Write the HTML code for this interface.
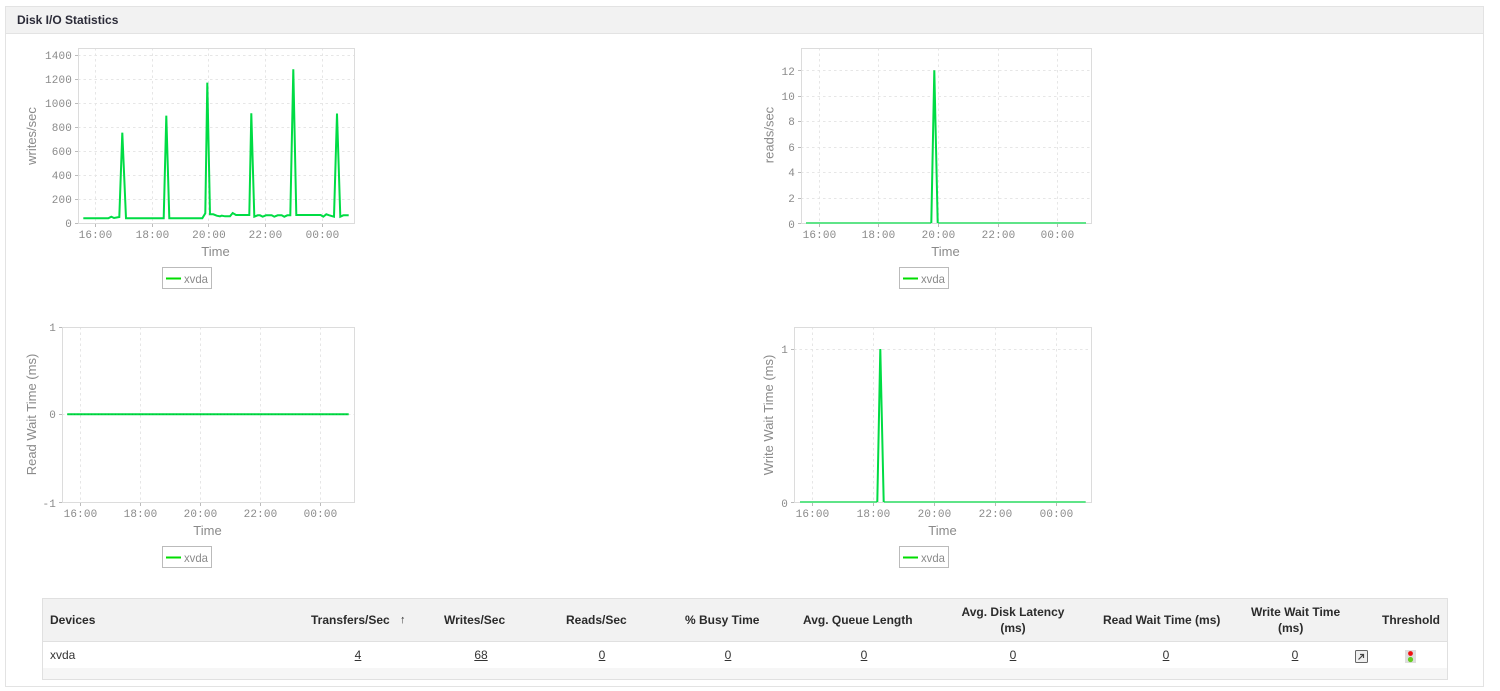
<!DOCTYPE html>
<html><head><meta charset="utf-8"><title>Disk I/O Statistics</title>
<style>
html,body{margin:0;padding:0;background:#fff;width:1500px;height:691px;overflow:hidden;font-family:"Liberation Sans",sans-serif;color:#333}
.panel{position:absolute;left:5px;top:6px;width:1477px;height:679px;border:1px solid #e3e3e3}
.phead{position:absolute;left:0;top:0;width:1477px;height:26px;background:#f2f2f2;border-bottom:1px solid #e3e3e3;font-weight:bold;font-size:12px;line-height:26px;color:#2b2b38;text-indent:11px}
svg{position:absolute;left:0;top:0}
svg.ch{filter:blur(.3px)}
svg text{font-family:"Liberation Sans",sans-serif;fill:#8a8a8a;font-size:13px}
svg .t{font-family:"Liberation Mono",monospace;font-size:11px;fill:#8a8a8a;letter-spacing:.15px}
svg .x{font-size:12px}
.grid{stroke:#e6e6e6;stroke-width:1;stroke-dasharray:2.5 3;fill:none}
.box{fill:none;stroke:#dcdcdc;stroke-width:1}
.lg{fill:#fff;stroke:#bbb;stroke-width:1}
.tk{stroke:#bbb;stroke-width:1}
.ln{fill:none;stroke:#00dc44;stroke-width:2;stroke-linejoin:miter}
.fl{fill:none;stroke:#5fe488;stroke-width:2}
.dots{fill:none;stroke:#00c038;stroke-width:1.4;stroke-dasharray:1 2.4}
.lgl{stroke:#00dd00;stroke-width:2}
.tbl{position:absolute;left:42px;top:598px;width:1404px;height:80px;border:1px solid #e0e0e0;background:#f6f6f6}
.thd{position:absolute;left:0;top:0;width:1404px;height:42px;background:#f2f2f2;border-bottom:1px solid #e0e0e0}
.row{position:absolute;left:0;top:43px;width:1404px;height:26px;background:#fff}
.c{position:absolute;text-align:center;font-size:12px;line-height:16px;white-space:nowrap}
.h{font-weight:bold;color:#2b2b2b}
.d{top:647px;color:#333}
.d u{color:#333}
</style></head><body>
<div class="panel"><div class="phead">Disk I/O Statistics</div></div>

<svg class="ch" width="1500" height="691" viewBox="0 0 1500 691">
<!-- chart 1 -->
<g class="grid"><path d="M78 55.5H354M78 79.5H354M78 103.5H354M78 127.5H354M78 151.5H354M78 175.5H354M78 199.5H354M95.5 48V223M152.5 48V223M208.5 48V223M265.5 48V223M322.5 48V223"/></g>
<rect class="box" x="78.5" y="48.5" width="276" height="175"/>
<path class="tk" d="M75 55.5h3M75 79.5h3M75 103.5h3M75 127.5h3M75 151.5h3M75 175.5h3M75 199.5h3M75 223.5h3M95.5 224v3M152.5 224v3M208.5 224v3M265.5 224v3M322.5 224v3"/>
<polyline class="ln" points="83.3,218.3 108.3,218.3 111.3,216.7 114,218 119.3,217 122.3,132.7 126,218.3 163.7,218.3 166.3,115.7 169.3,218.3 202.3,218.3 205.3,213.3 207.3,82.7 210,214.3 213.3,214.3 216.7,215.7 220,216.3 221.7,215.7 225,216.3 230,216.3 232.7,213 236,215 249.3,215 251.3,113.3 254.3,216.7 257.7,215.3 260,215.3 262.7,216.7 266,215.3 271.7,215.3 274.3,216.7 277.7,215.3 281.7,215.3 284.3,216.7 287.3,215.3 290.3,215.3 293.3,69.3 296.3,215 320.7,215 323.3,216.7 326.3,214.3 329.3,215.3 334,216.7 337,113.5 340.3,216.7 343.3,215.3 348.7,215.3"/>
<g text-anchor="end"><text class="t" x="72" y="59">1400</text><text class="t" x="72" y="83">1200</text><text class="t" x="72" y="107">1000</text><text class="t" x="72" y="131">800</text><text class="t" x="72" y="155">600</text><text class="t" x="72" y="179">400</text><text class="t" x="72" y="203">200</text><text class="t" x="72" y="227">0</text></g>
<g text-anchor="middle"><text class="t" x="95.5" y="238">16:00</text><text class="t" x="152.5" y="238">18:00</text><text class="t" x="209" y="238">20:00</text><text class="t" x="265.5" y="238">22:00</text><text class="t" x="322.5" y="238">00:00</text>
<text x="215.5" y="256">Time</text><text transform="translate(36 136) rotate(-90)">writes/sec</text></g>
<rect class="lg" x="162.5" y="267.5" width="49" height="21"/><path class="lgl" d="M166 278.5h15"/><text class="x" x="184" y="283" textLength="24" lengthAdjust="spacingAndGlyphs">xvda</text>

<!-- chart 2 -->
<g class="grid"><path d="M801 70.5H1091M801 96.5H1091M801 121.5H1091M801 147.5H1091M801 172.5H1091M801 198.5H1091M819.5 48V223M878.5 48V223M938.5 48V223M998.5 48V223M1057.5 48V223"/></g>
<rect class="box" x="801.5" y="48.5" width="290" height="175"/>
<path class="tk" d="M798 70.5h3M798 96.5h3M798 121.5h3M798 147.5h3M798 172.5h3M798 198.5h3M798 223.5h3M819.5 224v3M878.5 224v3M938.5 224v3M998.5 224v3M1057.5 224v3"/>
<path class="fl" d="M806 223H931M938 223H1086"/>
<polyline class="ln" points="931.3,223 934.3,70.3 937.7,223"/>
<g text-anchor="end"><text class="t" x="795" y="75">12</text><text class="t" x="795" y="100">10</text><text class="t" x="795" y="125">8</text><text class="t" x="795" y="151">6</text><text class="t" x="795" y="176">4</text><text class="t" x="795" y="202">2</text><text class="t" x="795" y="228">0</text></g>
<g text-anchor="middle"><text class="t" x="819.5" y="238">16:00</text><text class="t" x="878.5" y="238">18:00</text><text class="t" x="938.5" y="238">20:00</text><text class="t" x="998.5" y="238">22:00</text><text class="t" x="1057.5" y="238">00:00</text>
<text x="945.5" y="256">Time</text><text transform="translate(773.500 135) rotate(-90)">reads/sec</text></g>
<rect class="lg" x="899.5" y="267.5" width="49" height="21"/><path class="lgl" d="M903 278.5h15"/><text class="x" x="921" y="283" textLength="24" lengthAdjust="spacingAndGlyphs">xvda</text>

<!-- chart 3 -->
<g class="grid"><path d="M62 414.5H354M80.5 327V502M140.5 327V502M200.5 327V502M260.5 327V502M320.5 327V502"/></g>
<rect class="box" x="62.5" y="327.5" width="292" height="175"/>
<path class="tk" d="M59 327.5h3M59 414.5h3M59 502.5h3M80.5 503v3M140.5 503v3M200.5 503v3M260.5 503v3M320.5 503v3"/>
<polyline class="ln" points="67.3,414.3 348.7,414.3"/>
<path class="dots" d="M67.3 414.3H348.7"/>
<g text-anchor="end"><text class="t" x="56" y="331">1</text><text class="t" x="56" y="418">0</text><text class="t" x="56" y="507">-1</text></g>
<g text-anchor="middle"><text class="t" x="80.5" y="517">16:00</text><text class="t" x="140.5" y="517">18:00</text><text class="t" x="200.5" y="517">20:00</text><text class="t" x="260.5" y="517">22:00</text><text class="t" x="320.5" y="517">00:00</text>
<text x="207.5" y="535">Time</text><text transform="translate(36 414.500) rotate(-90)">Read Wait Time (ms)</text></g>
<rect class="lg" x="162.5" y="546.5" width="49" height="21"/><path class="lgl" d="M166 557.5h15"/><text class="x" x="184" y="562" textLength="24" lengthAdjust="spacingAndGlyphs">xvda</text>

<!-- chart 4 -->
<g class="grid"><path d="M794 349.5H1091M812.5 327V502M873.5 327V502M934.5 327V502M995.5 327V502M1056.5 327V502"/></g>
<rect class="box" x="794.5" y="327.5" width="297" height="175"/>
<path class="tk" d="M791 349.5h3M791 502.5h3M812.5 503v3M873.5 503v3M934.5 503v3M995.5 503v3M1056.5 503v3"/>
<path class="fl" d="M800 502H877M884 502H1085.700"/>
<polyline class="ln" points="877.3,502 880.3,349 883.7,502"/>
<g text-anchor="end"><text class="t" x="788" y="353">1</text><text class="t" x="788" y="507">0</text></g>
<g text-anchor="middle"><text class="t" x="812.5" y="517">16:00</text><text class="t" x="873.5" y="517">18:00</text><text class="t" x="934.5" y="517">20:00</text><text class="t" x="995.5" y="517">22:00</text><text class="t" x="1056.5" y="517">00:00</text>
<text x="942.5" y="535">Time</text><text transform="translate(773 415) rotate(-90)">Write Wait Time (ms)</text></g>
<rect class="lg" x="899.5" y="546.5" width="49" height="21"/><path class="lgl" d="M903 557.5h15"/><text class="x" x="921" y="562" textLength="24" lengthAdjust="spacingAndGlyphs">xvda</text>
</svg>

<div class="tbl"><div class="thd"></div><div class="row"></div></div>

<div class="c h" style="left:50px;top:612px">Devices</div>
<div class="c h" style="left:311px;top:612px">Transfers/Sec</div>
<div class="c" style="left:400px;top:612px;font-size:11px;color:#333">↑</div>
<div class="c h" style="left:444px;top:612px">Writes/Sec</div>
<div class="c h" style="left:566px;top:612px">Reads/Sec</div>
<div class="c h" style="left:685px;top:612px">% Busy Time</div>
<div class="c h" style="left:803px;top:612px">Avg. Queue Length</div>
<div class="c h" style="left:953px;width:120px;top:604px">Avg. Disk Latency<br>(ms)</div>
<div class="c h" style="left:1103px;top:612px">Read Wait Time (ms)</div>
<div class="c h" style="left:1251px;top:604px">Write Wait Time</div>
<div class="c h" style="left:1278px;top:620px">(ms)</div>
<div class="c h" style="left:1382px;top:612px">Threshold</div>

<div class="c d" style="left:50px">xvda</div>
<div class="c d" style="left:338px;width:40px"><u>4</u></div>
<div class="c d" style="left:461px;width:40px"><u>68</u></div>
<div class="c d" style="left:582px;width:40px"><u>0</u></div>
<div class="c d" style="left:708px;width:40px"><u>0</u></div>
<div class="c d" style="left:844px;width:40px"><u>0</u></div>
<div class="c d" style="left:993px;width:40px"><u>0</u></div>
<div class="c d" style="left:1146px;width:40px"><u>0</u></div>
<div class="c d" style="left:1275px;width:40px"><u>0</u></div>

<svg width="1500" height="691" viewBox="0 0 1500 691">
<rect x="1355.5" y="650.5" width="12" height="12" rx="1" fill="#efefef" stroke="#666"/>
<path d="M1358.5 659.5L1363 655M1360 654.500h3.500v3.500" fill="none" stroke="#444" stroke-width="1.2"/>
<rect x="1405" y="650" width="11" height="13" fill="#dedede"/>
<circle cx="1410.5" cy="653.5" r="2.4" fill="#f01010"/>
<circle cx="1410.5" cy="659.5" r="2.6" fill="#66cc22"/>
</svg>
</body></html>
